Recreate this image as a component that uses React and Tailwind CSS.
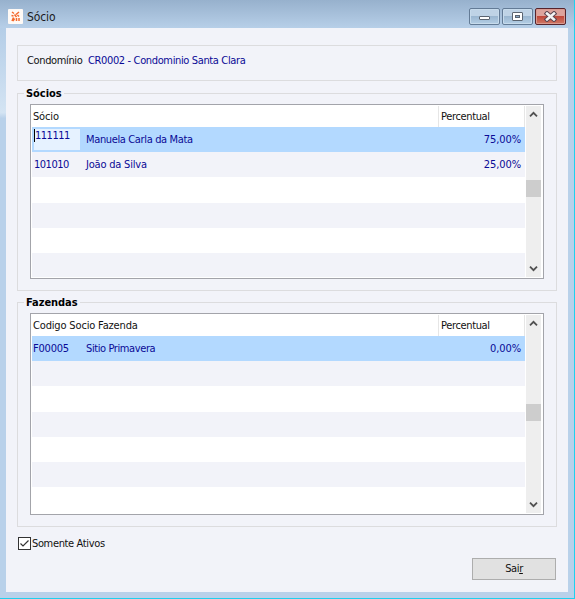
import React from "react";

function AppIcon() {
  return (
    <svg width="15" height="15" viewBox="0 0 15 15" className="ml-[8px] mt-[9px] shrink-0">
      <rect width="15" height="15" rx="1" fill="#fffaf6" />
      <g stroke="#f4692c" strokeWidth="1.5" fill="none">
        <path d="M4 3l2 1.500M8 5.500L11 3M3.500 6.500l2 .5M6.500 5.500l2 2.500M9.500 6l1.500 1.500M4 12l1.500-3.500M6.500 9.500L5 12M8.500 12V9M11 12V9" />
      </g>
    </svg>
  );
}

function TitleButton({ kind }) {
  const close = kind === "close";
  return (
    <div
      className={
        "flex h-[17px] w-[31px] items-center justify-center rounded-[2px] border " +
        (close
          ? "border-[#56242c] bg-linear-to-b from-[#dda39c] from-45% via-[#c0473a] via-50% to-[#cf7967] shadow-[inset_0_0_0_1px_#d99a90]"
          : "border-[#637b96] bg-linear-to-b from-[#bfd3e6] from-45% via-[#9bb7d1] via-50% to-[#b4cee5] shadow-[inset_0_0_0_1px_#c7dbec]")
      }
    >
      <svg width="13" height="11" viewBox="0 0 13 11" className="-mt-px">
        {kind === "min" && <rect x="1.500" y="5.500" width="10" height="3" rx=".5" fill="#fff" stroke="#5b6470" />}
        {kind === "max" && (
          <g stroke="#5b6470">
            <rect x="1.500" y="1.500" width="10" height="8" rx=".5" fill="#fff" />
            <rect x="4.500" y="4.500" width="4" height="2" fill="#8ba9c7" />
          </g>
        )}
        {close && (
          <g fill="none">
            <path d="M3 2.500l7 6M10 2.500L3 8.500" stroke="#5b4550" strokeWidth="4.500" strokeLinecap="square" />
            <path d="M3 2.500l7 6M10 2.500L3 8.500" stroke="#f4f4f4" strokeWidth="2.500" strokeLinecap="square" />
          </g>
        )}
      </svg>
    </div>
  );
}

function Group({ title, className, children }) {
  return (
    <section className={"relative border border-[#dcdcde] px-[12px] pt-[10px] " + className}>
      <h2 className="absolute -top-[7px] left-[6px] h-[14px] bg-[#f2f3f9] px-[2px] text-[11px] font-bold leading-[13px] tracking-[-0.050px] text-black">
        {title}
      </h2>
      {children}
    </section>
  );
}

function Chevron({ down }) {
  return (
    <svg width="9" height="7" viewBox="0 0 9 7" className={down ? "rotate-180" : ""}>
      <path d="M1 5.300L4.500 1.800L8 5.300" fill="none" stroke="#505050" strokeWidth="1.800" />
    </svg>
  );
}

function Grid({ header, bodyClass, thumbClass, rows, blanks, stripeFirst }) {
  return (
    <div className="flex border border-[#a3a4aa] bg-white pb-px pl-px pt-px">
      <div className={"w-[494px] overflow-hidden " + bodyClass}>
        <div className="flex h-[21px] leading-[22px]">
          <span className="w-[407px] border-r border-[#e6e6e6] pl-[1px] tracking-[-0.160px] text-[#111]">{header}</span>
          <span className="w-[86px] border-r border-[#e6e6e6] pl-[2px] text-[#111]">Percentual</span>
        </div>
        {rows.map((r, i) => (
          <div
            key={r.name}
            className={"flex h-[25.200px] w-[493px] leading-[26px] text-[#0a0a96] " + (i === 0 ? "bg-[#b3d9ff]" : "bg-[#f2f3f9]")}
          >
            {r.editing ? (
              <span className="ml-[2px] mt-[2px] h-[21px] w-[46px] bg-[#e6f2ff]">
                <span className="block h-[13px] border-l border-black leading-[14px] tracking-[-0.500px]">{r.code}</span>
              </span>
            ) : (
              <span className={"w-[48px] " + (r.code[0] === "F" ? "pl-[1px] tracking-[-0.200px]" : "pl-[2px] tracking-[-0.500px]")}>
                {r.code}
              </span>
            )}
            <span className={"ml-[6px] grow " + r.nameClass}>{r.name}</span>
            <span className="pr-[4px] tracking-[-0.100px]">{r.pct}</span>
          </div>
        ))}
        {blanks.map((b) => (
          <div key={b} className={"h-[25.200px] w-[493px] " + (b % 2 === stripeFirst ? "bg-[#f2f3f9]" : "bg-white")} />
        ))}
      </div>
      <div className="flex w-[15px] flex-col items-center bg-[#eeeeee]">
        <div className="flex h-[17px] items-center">
          <Chevron />
        </div>
        <div className={"h-[17px] w-[15px] bg-[#cdcdcd] " + thumbClass} />
        <div className="grow" />
        <div className="flex h-[17px] items-center">
          <Chevron down />
        </div>
      </div>
    </div>
  );
}

export default function App() {
  return (
    <div className="h-[599px] w-[575px] overflow-hidden border-b border-r border-[#1fd0ee] bg-[#b9d1ea] bg-linear-to-b from-[#97b1cd] from-0% via-[#b9d1ea] via-5% to-[#b9d1ea] font-['DejaVu_Sans_Condensed','DejaVu_Sans',sans-serif] text-[11px] tracking-[-0.360px] font-stretch-condensed">
      <header className="flex h-[28px]">
        <AppIcon />
        <span className="ml-[4px] mt-[9px] grow text-[12px] leading-[16px] tracking-[-0.100px] text-[#1b1b1b]">Sócio</span>
        <div className="mr-[8px] mt-[8px] flex gap-[2px]">
          <TitleButton kind="min" />
          <TitleButton kind="max" />
          <TitleButton kind="close" />
        </div>
      </header>
      <div className="flex">
        <div className="h-[564px] w-[6px] bg-linear-to-b from-[#b4cde7] via-[#d4e4f3] via-15% to-[#b9d1ea] to-16%" />
        <main className="h-[564px] w-[562px] bg-[#f2f3f9] pl-[11px] pt-[17px]">
          <div className="flex h-[36px] w-[540px] border border-[#dcdcde] pl-[9px] leading-[29px]">
            <span className="w-[61px] text-[#111]">Condomínio</span>
            <span className="text-[#0a0a96]">CR0002 - Condominio Santa Clara</span>
          </div>
          <Group title="Sócios" className="mt-[12px] h-[198px] w-[540px]">
            <Grid
              header="Sócio"
              bodyClass="h-[171px]"
              thumbClass="mt-[57px]"
              rows={[
                { code: "111111", name: "Manuela Carla da Mata", nameClass: "tracking-[-0.360px]", pct: "75,00%", editing: true },
                { code: "101010", name: "João da Silva", nameClass: "tracking-[-0.200px]", pct: "25,00%" },
              ]}
              blanks={[0, 1, 2, 3]}
              stripeFirst={1}
            />
          </Group>
          <Group title="Fazendas" className="mt-[11px] h-[225px] w-[540px]">
            <Grid
              header="Codigo Socio Fazenda"
              bodyClass="h-[198px]"
              thumbClass="mt-[72px]"
              rows={[{ code: "F00005", name: "Sitio Primavera", nameClass: "tracking-[-0.400px]", pct: "0,00%" }]}
              blanks={[0, 1, 2, 3, 4, 5]}
              stripeFirst={0}
            />
          </Group>
          <label className="ml-px mt-[10px] flex h-[13px] items-center gap-px text-[#111]">
            <svg width="13" height="13" viewBox="0 0 13 13">
              <rect x=".5" y=".5" width="12" height="12" fill="#fff" stroke="#333" />
              <path d="M2.500 6.500L5 9L10.500 3.500" fill="none" stroke="#333" strokeWidth="1.200" />
            </svg>
            <span className="pt-[2px]">Somente Ativos</span>
          </label>
          <button className="ml-[455px] mt-[8px] block h-[22px] w-[84px] border border-[#adadad] bg-[#e1e1e1] text-[#111]">
            Sai<u className="underline-offset-1">r</u>
          </button>
        </main>
      </div>
    </div>
  );
}
